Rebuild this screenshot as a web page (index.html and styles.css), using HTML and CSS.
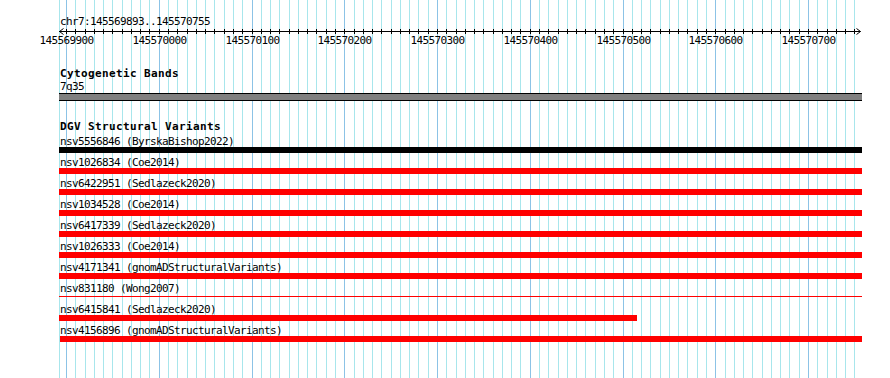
FILE: index.html
```html
<!DOCTYPE html>
<html lang="en">
<head>
    <meta charset="UTF-8">
    <title>chr7:145569893..145570755</title>
    <link rel="stylesheet" href="styles.css">
</head>
<body>
    <div class="panel">
        <svg class="grid" id="grid" width="890" height="378"></svg>
        <div class="tracks">
            <div class="ruler">
                <div class="ruler-title">chr7:145569893..145570755</div>
                <svg class="ruler-axis" id="rulerAxis" width="890" height="18"></svg>
            </div>
            <section class="track track-cyto">
                <h2 class="track-title">Cytogenetic Bands</h2>
                <div class="feature-label">7q35</div>
                <div class="band"></div>
            </section>
            <section class="track track-dgv">
                <h2 class="track-title">DGV Structural Variants</h2>
                <div class="variant-list" id="variantList"></div>
            </section>
        </div>
    </div>

    <script>
        const SVG_NS = 'http://www.w3.org/2000/svg';
        const VIEW_START = 145569893;
        const VIEW_END = 145570755;
        const VIEW_LEFT = 59;
        const VIEW_RIGHT = 862;

        // 100 bp is about 93 px on this panel
        function bpToX(bp) {
            return Math.round(66 + (bp - 145569900) * 0.9275);
        }

        const variants = [
            { id: 'nsv5556846', study: 'ByrskaBishop2022', start: 145560000, end: 145580000, color: 'black' },
            { id: 'nsv1026834', study: 'Coe2014', start: 145560000, end: 145580000 },
            { id: 'nsv6422951', study: 'Sedlazeck2020', start: 145560000, end: 145580000 },
            { id: 'nsv1034528', study: 'Coe2014', start: 145560000, end: 145580000 },
            { id: 'nsv6417339', study: 'Sedlazeck2020', start: 145560000, end: 145580000 },
            { id: 'nsv1026333', study: 'Coe2014', start: 145560000, end: 145580000 },
            { id: 'nsv4171341', study: 'gnomADStructuralVariants', start: 145560000, end: 145580000 },
            { id: 'nsv831180', study: 'Wong2007', start: 145560000, end: 145580000, thin: true },
            { id: 'nsv6415841', study: 'Sedlazeck2020', start: 145560000, end: 145570516 },
            { id: 'nsv4156896', study: 'gnomADStructuralVariants', start: 145569894, end: 145580000 }
        ];

        function line(parent, x1, y1, x2, y2, cls) {
            const el = document.createElementNS(SVG_NS, 'line');
            el.setAttribute('x1', x1);
            el.setAttribute('y1', y1);
            el.setAttribute('x2', x2);
            el.setAttribute('y2', y2);
            el.setAttribute('class', cls);
            parent.appendChild(el);
        }

        function drawGrid() {
            const grid = document.getElementById('grid');
            line(grid, VIEW_LEFT + 0.5, 0, VIEW_LEFT + 0.5, 378, 'grid-minor');
            for (let bp = 145569900; bp <= VIEW_END; bp += 10) {
                const x = bpToX(bp) + 0.5;
                line(grid, x, 0, x, 378, bp % 100 === 0 ? 'grid-major' : 'grid-minor');
            }
        }

        function drawRuler() {
            const axis = document.getElementById('rulerAxis');
            const right = VIEW_RIGHT - 1.5;
            line(axis, VIEW_LEFT, 3.5, right, 3.5, 'axis');
            line(axis, VIEW_LEFT + 0.5, 3.5, VIEW_LEFT + 4.5, 0.5, 'axis');
            line(axis, VIEW_LEFT + 0.5, 3.5, VIEW_LEFT + 4.5, 6.5, 'axis');
            line(axis, right, 3.5, right - 4, 0.5, 'axis');
            line(axis, right, 3.5, right - 4, 6.5, 'axis');
            for (let bp = 145569900; bp <= VIEW_END; bp += 10) {
                const x = bpToX(bp) + 0.5;
                line(axis, x, 1, x, 6, 'axis');
                if (bp % 100 === 0) {
                    const label = document.createElementNS(SVG_NS, 'text');
                    label.setAttribute('x', x);
                    label.setAttribute('y', 16);
                    label.setAttribute('class', 'axis-label');
                    label.textContent = bp;
                    axis.appendChild(label);
                }
            }
        }

        function displayVariants() {
            const list = document.getElementById('variantList');
            variants.forEach(variant => {
                const left = Math.max(VIEW_LEFT, bpToX(variant.start));
                const right = Math.min(VIEW_RIGHT, bpToX(variant.end));
                const row = document.createElement('div');
                row.className = 'variant';
                row.innerHTML = `
                    <div class="feature-label">${variant.id} (${variant.study})</div>
                    <div class="variant-bar ${variant.thin ? 'thin' : ''} ${variant.color || 'red'}"
                         style="margin-left: ${left - VIEW_LEFT}px; width: ${right - left}px"></div>
                `;
                list.appendChild(row);
            });
        }

        drawGrid();
        drawRuler();
        displayVariants();
    </script>
</body>
</html>
```

FILE: styles.css
```css
body {
    margin: 0;
    background-color: #ffffff;
    color: #000000;
    font-family: "DejaVu Sans Mono", "Liberation Mono", monospace;
    font-size: 11px;
    letter-spacing: -0.62px;
}
.panel {
    position: relative;
    width: 890px;
    height: 378px;
    overflow: hidden;
}
.grid {
    position: absolute;
    top: 0;
    left: 0;
}
.grid-minor {
    stroke: #a8e6ec;
    stroke-width: 1;
}
.grid-major {
    stroke: #8cc3e6;
    stroke-width: 1;
}
.tracks {
    position: relative;
}
.ruler-title {
    padding: 16px 0 0 60px;
    line-height: 12px;
}
.ruler-axis {
    display: block;
}
.axis {
    stroke: #000000;
    stroke-width: 1;
}
.axis-label {
    font-family: "DejaVu Sans Mono", "Liberation Mono", monospace;
    font-size: 11px;
    letter-spacing: -0.62px;
    text-anchor: middle;
    fill: #000000;
}
.track {
    padding-left: 59px;
}
.track-title {
    margin: 0;
    padding-left: 1px;
    font-size: 11px;
    font-weight: bold;
    letter-spacing: 0.38px;
    line-height: 14px;
}
.feature-label {
    padding-left: 1px;
    line-height: 11px;
    white-space: nowrap;
}
.track-cyto {
    margin-top: 21px;
}
.track-cyto .feature-label {
    line-height: 12px;
}
.band {
    height: 6px;
    width: 803px;
    background-color: #808080;
    border-top: 1px solid #000000;
    border-bottom: 1px solid #000000;
}
.track-dgv {
    margin-top: 19px;
}
.variant-list {
    padding-top: 2px;
}
.variant {
    margin-bottom: 4px;
}
.variant-bar {
    height: 6px;
}
.variant-bar.red {
    background-color: #ff0000;
}
.variant-bar.black {
    background-color: #000000;
}
.variant-bar.thin {
    background: none;
    display: flex;
    align-items: center;
}
.variant-bar.thin::before {
    content: "";
    flex: 1;
    height: 1px;
    margin-top: -1px;
    background-color: #ff0000;
}
```
